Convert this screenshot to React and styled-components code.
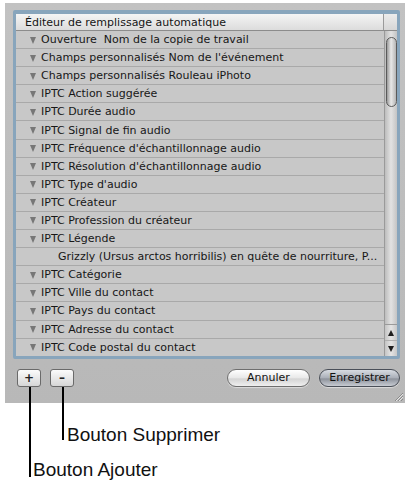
import React from "react";
import styled, { createGlobalStyle } from "styled-components";

const Global = createGlobalStyle`
  html, body { margin: 0; padding: 0; background: #ffffff; }
  body { font-family: "DejaVu Sans", "Liberation Sans", sans-serif; }
`;

const Page = styled.div`
  width: 412px;
  height: 484px;
  padding: 3px 0 0 5px;
  box-sizing: border-box;
  position: relative;
`;

const Panel = styled.div`
  width: 400px;
  height: 400px;
  box-sizing: border-box;
  background: linear-gradient(#c2c2c2, #b8b8b8);
  padding: 7px 5px 0 8px;
  display: flex;
  flex-direction: column;
  position: relative;
`;

const ListBox = styled.div`
  height: 349px;
  box-sizing: border-box;
  border: 3px solid #88a5bc;
  border-top-width: 4px;
  border-radius: 2px;
  display: flex;
  flex-direction: column;
  background: #c9c9c9;
  overflow: hidden;
  box-shadow: inset 0 0 0 1px #6f8497;
`;

const HeaderRow = styled.div`
  display: flex;
  height: 17px;
  flex: none;
  background: linear-gradient(#f4f4f4, #dcdcdc);
  border-bottom: 1px solid #8c8c8c;
  box-sizing: border-box;
`;

const HeaderCell = styled.div`
  flex: 1;
  padding-left: 9px;
  font-size: 11px;
  line-height: 17px;
  color: #151515;
  white-space: nowrap;
  overflow: hidden;
`;

const HeaderCorner = styled.div`
  width: 13px;
  border-left: 1px solid #9a9a9a;
  background: linear-gradient(#ececec, #d6d6d6);
`;

const Body = styled.div`
  flex: 1;
  display: flex;
  min-height: 0;
`;

const Rows = styled.div`
  flex: 1;
  overflow: hidden;
`;

const Row = styled.div`
  height: 18.1px;
  box-sizing: border-box;
  border-bottom: 1px solid #a9a9a9;
  background: #c8c8c8;
  display: flex;
  align-items: center;
  padding-left: ${(p) => (p.$value ? 42 : 14)}px;
  font-size: 11px;
  color: #171717;
  white-space: pre;
`;

const Disclosure = styled.span`
  display: inline-block;
  width: 0;
  height: 0;
  border-left: 3.5px solid transparent;
  border-right: 3.5px solid transparent;
  border-top: 7px solid #777777;
  margin-right: 5px;
  margin-top: 1px;
`;

const Scroll = styled.div`
  width: 13px;
  border-left: 1px solid #9a9a9a;
  background: linear-gradient(90deg, #bdbdbd, #e2e2e2 50%, #c4c4c4);
  display: flex;
  flex-direction: column;
  padding: 6px 0 0 0;
  box-sizing: border-box;
`;

const Thumb = styled.div`
  margin: 0 auto;
  width: 11px;
  height: 70px;
  border-radius: 6px;
  border: 1px solid #5a5a5a;
  box-sizing: border-box;
  background: linear-gradient(90deg, #9a9a9a, #e8e8e8 45%, #b5b5b5);
`;

const Track = styled.div`
  flex: 1;
`;

const ArrowBtn = styled.div`
  height: 15px;
  display: flex;
  align-items: center;
  justify-content: center;
  border-top: 1px solid ${(p) => (p.$first ? "#9a9a9a" : "#b0b0b0")};
  background: linear-gradient(90deg, #c4c4c4, #e4e4e4 50%, #c8c8c8);
`;

const Arrow = styled.span`
  width: 0;
  height: 0;
  border-left: 3.5px solid transparent;
  border-right: 3.5px solid transparent;
  ${(p) =>
    p.$up
      ? "border-bottom: 6px solid #1e1e1e;"
      : "border-top: 6px solid #1e1e1e;"}
`;

const Footer = styled.div`
  display: flex;
  align-items: center;
  padding: 10px 0 0 4px;
  gap: 9px;
`;

const SquareButton = styled.div`
  width: 24px;
  height: 18px;
  box-sizing: border-box;
  border: 1px solid #6a6a6a;
  border-radius: 3px;
  background: linear-gradient(#fbfbfb, #d6d6d6);
  display: flex;
  align-items: center;
  justify-content: center;
  font-size: 12px;
  font-weight: bold;
  color: #222;
  position: relative;
  &::after {
    content: "";
    position: absolute;
    left: 11px;
    top: 17px;
    width: 2px;
    height: ${(p) => p.$lead}px;
    background: #000;
  }
`;

const Spacer = styled.div`
  flex: 1;
`;

const PillButton = styled.div`
  width: ${(p) => p.$w}px;
  height: 18px;
  box-sizing: border-box;
  border-radius: 9px;
  border: 1px solid ${(p) => (p.$default ? "#4a4f58" : "#6e6e6e")};
  background: ${(p) =>
    p.$default
      ? "linear-gradient(#d8dce2, #a9aeb7 50%, #8d929b 55%, #c7cbd2)"
      : "linear-gradient(#ffffff, #e8e8e8 50%, #d4d4d4 55%, #efefef)"};
  font-size: 11px;
  line-height: 16px;
  text-align: center;
  color: #111;
  box-shadow: 0 1px 1px rgba(255, 255, 255, 0.5);
`;

const Grip = styled.svg`
  position: absolute;
  right: 1px;
  bottom: 1px;
`;

const Label = styled.div`
  position: absolute;
  font-family: "Liberation Sans", Arial, sans-serif;
  font-size: 19px;
  line-height: 22px;
  color: #111;
  left: ${(p) => p.$x}px;
  top: ${(p) => p.$y}px;
  white-space: nowrap;
`;

const items = [
  ["g", "Ouverture  Nom de la copie de travail"],
  ["g", "Champs personnalisés Nom de l'événement"],
  ["g", "Champs personnalisés Rouleau iPhoto"],
  ["g", "IPTC Action suggérée"],
  ["g", "IPTC Durée audio"],
  ["g", "IPTC Signal de fin audio"],
  ["g", "IPTC Fréquence d'échantillonnage audio"],
  ["g", "IPTC Résolution d'échantillonnage audio"],
  ["g", "IPTC Type d'audio"],
  ["g", "IPTC Créateur"],
  ["g", "IPTC Profession du créateur"],
  ["g", "IPTC Légende"],
  ["v", "Grizzly (Ursus arctos horribilis) en quête de nourriture, P..."],
  ["g", "IPTC Catégorie"],
  ["g", "IPTC Ville du contact"],
  ["g", "IPTC Pays du contact"],
  ["g", "IPTC Adresse du contact"],
  ["g", "IPTC Code postal du contact"],
];

export default function App() {
  return (
    <>
      <Global />
      <Page>
        <Panel>
          <ListBox>
            <HeaderRow>
              <HeaderCell>Éditeur de remplissage automatique</HeaderCell>
              <HeaderCorner />
            </HeaderRow>
            <Body>
              <Rows>
                {items.map(([t, text], i) => (
                  <Row key={i} $value={t === "v"}>
                    {t === "g" && <Disclosure />}
                    {text}
                  </Row>
                ))}
              </Rows>
              <Scroll>
                <Thumb />
                <Track />
                <ArrowBtn $first>
                  <Arrow $up />
                </ArrowBtn>
                <ArrowBtn>
                  <Arrow />
                </ArrowBtn>
              </Scroll>
            </Body>
          </ListBox>
          <Footer>
            <SquareButton $lead={90}>+</SquareButton>
            <SquareButton $lead={53}>–</SquareButton>
            <Spacer />
            <PillButton $w={83}>Annuler</PillButton>
            <PillButton $w={81} $default>Enregistrer</PillButton>
          </Footer>
          <Grip width="11" height="11" viewBox="0 0 11 11">
            <path d="M10 2 L2 10 M10 5 L5 10 M10 8 L8 10" stroke="#8a8a8a" strokeWidth="1" />
            <path d="M10 3 L3 10 M10 6 L6 10" stroke="#e6e6e6" strokeWidth="1" />
          </Grip>
        </Panel>
        <Label $x={67} $y={424}>Bouton Supprimer</Label>
        <Label $x={33} $y={459}>Bouton Ajouter</Label>
      </Page>
    </>
  );
}
